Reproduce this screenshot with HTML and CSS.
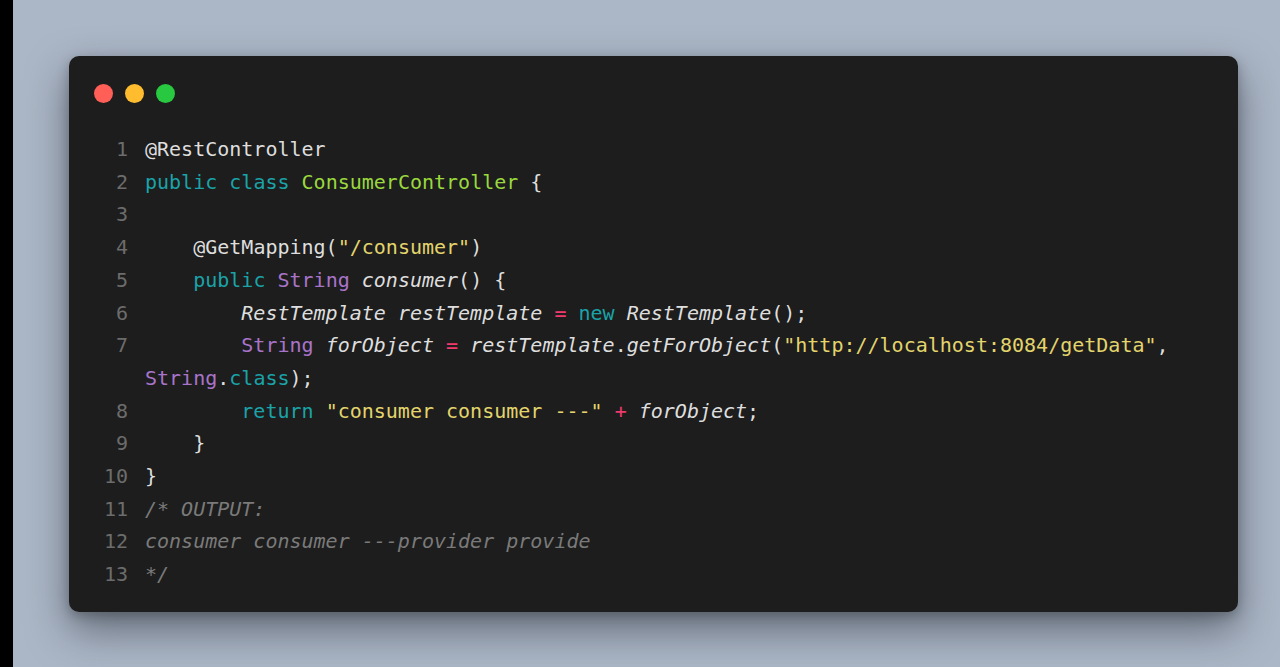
FILE: index.html
```html
<!DOCTYPE html>
<html lang="en">
<head>
<meta charset="utf-8">
<title>ConsumerController</title>
<link rel="stylesheet" href="styles.css">
</head>
<body>
<div class="strip"></div>
<main class="stage">
  <section class="window">
    <div class="dots">
      <span class="dot red"></span>
      <span class="dot yellow"></span>
      <span class="dot green"></span>
    </div>
    <div class="code">
      <div class="line"><span class="num">1</span><span class="src">@RestController</span></div>
      <div class="line"><span class="num">2</span><span class="src"><span class="kw">public</span> <span class="kw">class</span> <span class="cls">ConsumerController</span> {</span></div>
      <div class="line"><span class="num">3</span><span class="src"> </span></div>
      <div class="line"><span class="num">4</span><span class="src">    @GetMapping(<span class="str">"/consumer"</span>)</span></div>
      <div class="line"><span class="num">5</span><span class="src">    <span class="kw">public</span> <span class="ty">String</span> <span class="it">consumer</span>() {</span></div>
      <div class="line"><span class="num">6</span><span class="src">        <span class="it">RestTemplate</span> <span class="it">restTemplate</span> <span class="op">=</span> <span class="kw">new</span> <span class="it">RestTemplate</span>();</span></div>
      <div class="line"><span class="num">7</span><span class="src">        <span class="ty">String</span> <span class="it">forObject</span> <span class="op">=</span> <span class="it">restTemplate</span>.<span class="it">getForObject</span>(<span class="str">"http://localhost:8084/getData"</span>, <span class="ty">String</span>.<span class="kw">class</span>);</span></div>
      <div class="line"><span class="num">8</span><span class="src">        <span class="kw">return</span> <span class="str">"consumer consumer ---"</span> <span class="op">+</span> <span class="it">forObject</span>;</span></div>
      <div class="line"><span class="num">9</span><span class="src">    }</span></div>
      <div class="line"><span class="num">10</span><span class="src">}</span></div>
      <div class="line"><span class="num">11</span><span class="src cm">/* OUTPUT:</span></div>
      <div class="line"><span class="num">12</span><span class="src cm">consumer consumer ---provider provide</span></div>
      <div class="line"><span class="num">13</span><span class="src cm">*/</span></div>
    </div>
  </section>
</main>
</body>
</html>
```
FILE: styles.css
```css
html, body {
  margin: 0;
  height: 100%;
}
body {
  display: flex;
  background: #abb6c6;
  overflow: hidden;
}
.strip {
  width: 13px;
  flex: none;
  background: #000;
}
.stage {
  flex: 1;
  padding: 56px 42px 0 56px;
}
.window {
  background: #1d1d1d;
  border-radius: 10px;
  padding: 28px 25px 21px 25px;
  box-shadow: 0 18px 40px rgba(40, 45, 55, 0.55), 0 4px 12px rgba(0, 0, 0, 0.25);
}
.dots {
  display: flex;
  gap: 12px;
  height: 19px;
  margin-bottom: 30px;
}
.dot {
  width: 19px;
  height: 19px;
  border-radius: 50%;
}
.red { background: #ff5f57; }
.yellow { background: #febc2e; }
.green { background: #28c840; }
.code {
  font-family: "DejaVu Sans Mono", "Liberation Mono", monospace;
  font-size: 20px;
  line-height: 32.7px;
  color: #dedede;
}
.line {
  display: flex;
}
.num {
  flex: none;
  width: 34px;
  padding-right: 17px;
  text-align: right;
  color: #6c6c6c;
}
.src {
  flex: 1;
  min-width: 0;
  white-space: pre-wrap;
}
.kw { color: #1aa3a8; }
.cls { color: #9ad83e; }
.ty { color: #a874c9; }
.str { color: #e3d46c; }
.op { color: #f03a6e; }
.it { font-style: italic; }
.cm { color: #7a7a7a; font-style: italic; }
```
